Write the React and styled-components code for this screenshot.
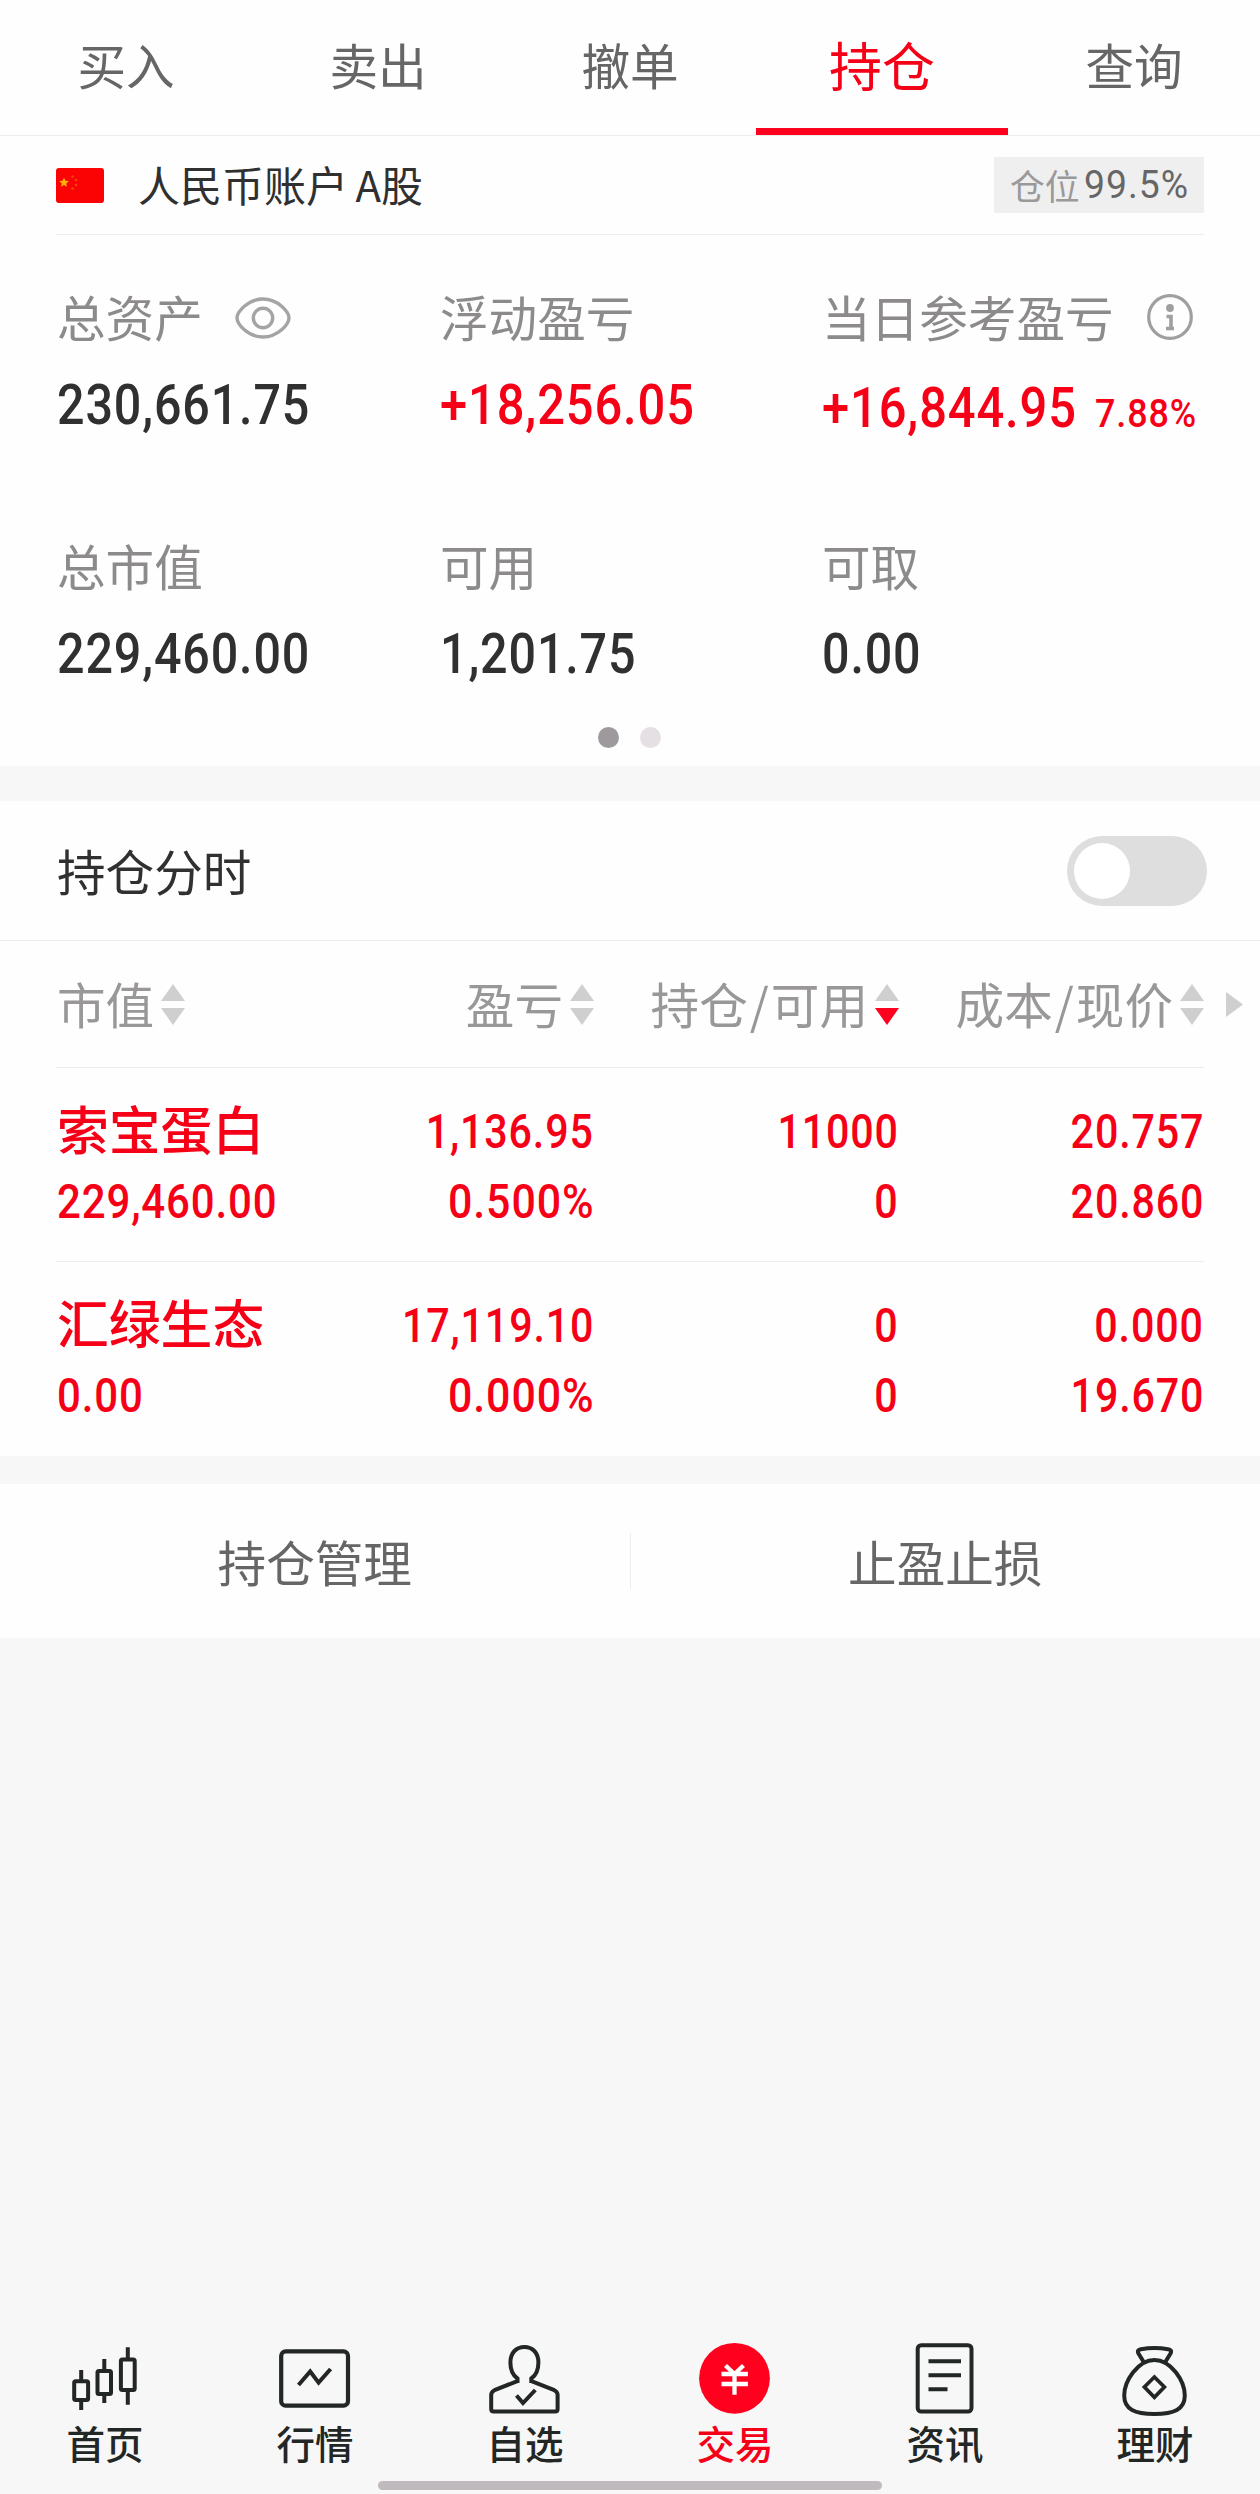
import styled, { createGlobalStyle } from "styled-components";

const GlobalStyle = createGlobalStyle`
  * {
    box-sizing: border-box;
  }
  body {
    margin: 0;
    background: #f7f7f7;
    font-family: "Noto Sans CJK SC", sans-serif;
  }
`;

const RED = "#f60018";

const Page = styled.div`
  width: 1260px;
  height: 2494px;
  display: flex;
  flex-direction: column;
  background: #f7f7f7;
  overflow: hidden;
`;

const Panel = styled.section`
  background: #fefefe;
  margin-bottom: ${({ $gap }) => $gap || 0}px;
`;

/* DIN-like digits: Roboto, slightly condensed */
const Num = styled.span`
  display: inline-block;
  font-family: Roboto, "Noto Sans CJK SC", sans-serif;
  font-size: ${({ $size }) => $size || 56}px;
  font-weight: ${({ $weight }) => $weight || 500};
  color: ${({ $color }) => $color || "inherit"};
  line-height: 1;
  letter-spacing: 1px;
  white-space: nowrap;
  transform: scaleX(${({ $scale }) => $scale || 0.865});
  transform-origin: ${({ $origin }) => $origin || "left"} center;
`;

const Tabs = styled.nav`
  display: flex;
  height: 136px;
  border-bottom: 1px solid #ececec;
`;

const Tab = styled.div`
  flex: 1;
  height: 135px;
  padding-top: 4px;
  text-align: center;
  line-height: 120px;
  font-size: ${({ $active }) => ($active ? 53 : 48.6)}px;
  color: ${({ $active }) => ($active ? RED : "#666")};
  border-bottom: ${({ $active }) => ($active ? "7px solid #ff001e" : "none")};
`;

const Account = styled.div`
  display: flex;
  align-items: center;
  height: 99px;
  margin: 0 56px;
  border-bottom: 1px solid #ededed;
`;

const AccountName = styled.div`
  flex: 1;
  margin-left: 34px;
  margin-top: -2px;
  font-size: 42px;
  line-height: 60px;
  color: #303030;
  word-spacing: -2px;
`;

const PositionBadge = styled.div`
  display: flex;
  align-items: center;
  width: 210px;
  height: 56px;
  padding-left: 16px;
  gap: 4px;
  background: #efefef;
  color: #999;
  font-size: 34.8px;
  line-height: 50px;
`;

const Summary = styled.div`
  display: grid;
  grid-template-columns: 383px 382px 1fr;
  padding: 50px 0 0 57px;
  height: 467px;
`;

const Stat = styled.div`
  height: 249px;
`;

const StatLabel = styled.div`
  display: flex;
  align-items: center;
  height: 62px;
  font-size: 48.6px;
  line-height: 62px;
  color: #8c8a8b;
`;

const StatValue = styled.div`
  display: flex;
  align-items: baseline;
  margin-top: ${({ $low }) => ($low ? 33 : 30)}px;
  color: ${({ $up }) => ($up ? RED : "#303030")};
`;

const DayRate = styled(Num)`
  margin-left: -19px;
`;

const Dots = styled.div`
  display: flex;
  justify-content: center;
  gap: 21px;
  height: 64px;
  padding: 25px 1px 0 0;
`;

const Dot = styled.i`
  width: 21px;
  height: 21px;
  border-radius: 50%;
  background: ${({ $on }) => ($on ? "#9d999c" : "#e5e0e4")};
`;

const ToggleRow = styled.div`
  display: flex;
  align-items: center;
  justify-content: space-between;
  height: 140px;
  padding: 0 53px 2px 57px;
  border-bottom: 1px solid #ececec;
  font-size: 48.6px;
  color: #303030;
`;

const Switch = styled.div`
  width: 140px;
  height: 70px;
  margin-top: 2px;
  padding: 7px;
  border-radius: 35px;
  background: #dedede;
  &::before {
    content: "";
    display: block;
    width: 56px;
    height: 56px;
    border-radius: 50%;
    background: #fff;
  }
`;

const TableHead = styled.div`
  display: flex;
  padding-left: 56px;
`;

const Row = styled.div`
  display: grid;
  grid-template-columns: 233px 305px 305px 305px;
  width: 1148px;
`;

const HeadRow = styled(Row)`
  height: 127px;
  align-items: center;
  border-bottom: 1px solid #ededed;
  font-size: 48.6px;
  line-height: 70px;
  color: #999798;
`;

const HeadCell = styled.div`
  display: flex;
  align-items: center;
  justify-content: ${({ $left }) => ($left ? "flex-start" : "flex-end")};
  padding-left: ${({ $left }) => ($left ? 1 : 0)}px;
  gap: 7px;
  white-space: nowrap;
`;

const HeadLabel = styled.span`
  margin-top: -2px;
`;

const Slash = styled.span`
  padding: 0 2px;
`;

const MoreCell = styled.div`
  display: flex;
  align-items: center;
  padding-left: 22px;
`;

const HoldingRow = styled(Row)`
  height: 194px;
  margin-left: 56px;
  padding-top: 29px;
  border-bottom: ${({ $last }) => ($last ? "none" : "1px solid #ededed")};
  color: ${RED};
`;

const HoldingCell = styled.div`
  display: flex;
  flex-direction: column;
  align-items: ${({ $left }) => ($left ? "flex-start" : "flex-end")};
  padding-left: ${({ $left }) => ($left ? 1 : 0)}px;
`;

const Line = styled.div`
  display: flex;
  align-items: center;
  height: 70px;
`;

const StockName = styled.span`
  font-size: 51.8px;
  line-height: 70px;
  font-weight: 500;
  margin-top: -8px;
`;

const Actions = styled.div`
  display: flex;
  align-items: center;
  height: 154px;
`;

const Action = styled.div`
  flex: 1;
  text-align: center;
  font-size: 48.6px;
  line-height: 56px;
  color: #666;
  & + & {
    border-left: 1px solid #ececec;
  }
`;

const BottomNav = styled.nav`
  display: flex;
  margin-top: auto;
`;

const NavItem = styled.div`
  flex: 1;
  display: flex;
  flex-direction: column;
  align-items: center;
  font-size: 38.5px;
  line-height: 49px;
  font-weight: 500;
  color: ${({ $active }) => ($active ? RED : "#222624")};
`;

const HomeBar = styled.div`
  flex: none;
  width: 504px;
  height: 9px;
  margin: 14px auto 4px 378px;
  border-radius: 5px;
  background: #bfbabe;
`;

const Flag = () => (
  <svg width="48" height="35" viewBox="0 0 48 35">
    <rect width="48" height="35" rx="3" fill="#fb0204" />
    <path d="M8 9.500l1.400 3.300 3.400.3-2.600 2.300.8 3.400-3-1.800-3 1.800.8-3.400-2.600-2.300 3.400-.3z" fill="#ffb400" />
    <g fill="#f04a00">
      <circle cx="16.500" cy="8.500" r="1.300" />
      <circle cx="20" cy="12" r="1.300" />
      <circle cx="20" cy="17" r="1.300" />
      <circle cx="16.500" cy="20.500" r="1.300" />
    </g>
  </svg>
);

const EyeIcon = styled((props) => (
  <svg {...props} width="56" height="42" viewBox="0 0 56 42" fill="none" stroke="#a5a3a4" strokeWidth="3.4">
    <path d="M2 21C2 15 13 2 28 2s26 13 26 19-11 19-26 19S2 27 2 21z" />
    <circle cx="28" cy="21" r="9.700" />
  </svg>
))`
  margin-left: 32px;
  margin-top: 4px;
`;

const InfoIcon = styled((props) => (
  <svg {...props} width="46" height="46" viewBox="0 0 46 46" fill="none" stroke="#a09e9f" strokeWidth="3.2">
    <circle cx="23" cy="23" r="21.300" />
    <circle cx="23" cy="14" r="3.900" fill="#a09e9f" stroke="none" />
    <path d="M19.500 22.500H24V34.500M19 34.500h8" strokeWidth="3.600" />
  </svg>
))`
  margin-left: 33px;
  margin-top: 1px;
`;

const SortIcon = ({ active }) => (
  <svg width="24" height="41" viewBox="0 0 24 41">
    <path d="M12 0l12 17H0z" fill="#cfcfcf" />
    <path d="M0 24h24L12 41z" fill={active ? "#ff001e" : "#cfcfcf"} />
  </svg>
);

const MoreIcon = () => (
  <svg width="17" height="25" viewBox="0 0 17 25">
    <path d="M0 0l17 12.500L0 25z" fill="#cfcfcf" />
  </svg>
);

const NavSvg = ({ children }) => (
  <svg width="72" height="78" viewBox="0 0 72 78" fill="none" stroke="#222624" strokeWidth="4">
    {children}
  </svg>
);

const icons = {
  home: (
    <NavSvg>
      <rect x="5.200" y="41.200" width="13.900" height="18.800" rx="1.500" />
      <rect x="28.500" y="31" width="13.500" height="23" rx="1.500" />
      <rect x="51.900" y="19.600" width="13.800" height="30.500" rx="1.500" />
      <path d="M12.200 30v10M12.200 61v9M35.300 19v11M35.300 55v8M58.800 7.300v11M58.800 51v13.700" />
    </NavSvg>
  ),
  market: (
    <NavSvg>
      <rect x="2.200" y="11.300" width="66.800" height="54.400" rx="4.500" strokeWidth="4.200" />
      <path d="M19.500 45L31.200 31.500l8.400 11.100L51.600 29" />
    </NavSvg>
  ),
  favorite: (
    <NavSvg>
      <path d="M28.500 43V38.500C24 35.500 21.400 30 21.400 22.500 21.400 12.500 27.500 7 35.400 7s14 5.500 14 15.500c0 7.500-2.600 13-7.100 16V43M29 40.800L5.500 50.200Q2.200 51.800 2.200 55v14q0 2.500 2.500 2.500h61.400q2.500 0 2.500-2.500V55q0-3.200-3.300-4.800L41.800 40.800" />
      <path d="M27.500 55.500l6.500 7.500L46.300 50" />
    </NavSvg>
  ),
  trade: (
    <NavSvg>
      <circle cx="35.500" cy="38.300" r="35.400" fill="#ff001e" stroke="none" />
      <path d="M26.500 25.500l9 8.500 9-8.500M22.500 34h26.400M22.500 44h26.400M35.500 33v21.700" stroke="#fff" strokeWidth="4.300" />
    </NavSvg>
  ),
  news: (
    <NavSvg>
      <rect x="8.700" y="5.200" width="53.800" height="66.400" rx="3.500" />
      <path d="M19.500 21.300H52M19.500 35.300H52M19.500 49.200h19" />
    </NavSvg>
  ),
  wealth: (
    <NavSvg>
      <path d="M35.400 20C19 20 5.200 41 5.200 55.500 5.200 69.500 16 74 35.400 74s30.400-4.500 30.400-18.500C65.800 41 52 20 35.400 20z" />
      <path d="M25 22.500l-5.500-9c-1.500-3 0-3.800 2.500-4.300q13.400-2.200 27 0c2.500.5 4 1.300 2.500 4.300l-5.500 9" />
      <path d="M35.400 37l10 10-10 10.300-10-10.300z" strokeWidth="3.700" />
    </NavSvg>
  ),
};

const tabs = ["买入", "卖出", "撤单", "持仓", "查询"];

const columns = [["市值"], ["盈亏"], ["持仓", "可用"], ["成本", "现价"]];

const holdings = [
  {
    name: "索宝蛋白",
    value: "229,460.00",
    cells: [
      ["1,136.95", "0.500%"],
      ["11000", "0"],
      ["20.757", "20.860"],
    ],
  },
  {
    name: "汇绿生态",
    value: "0.00",
    cells: [
      ["17,119.10", "0.000%"],
      ["0", "0"],
      ["0.000", "19.670"],
    ],
  },
];

const navItems = [
  { label: "首页", icon: "home" },
  { label: "行情", icon: "market" },
  { label: "自选", icon: "favorite" },
  { label: "交易", icon: "trade" },
  { label: "资讯", icon: "news" },
  { label: "理财", icon: "wealth" },
];

const App = () => (
  <>
    <GlobalStyle />
    <Page>
      <Panel $gap={35}>
        <Tabs>
          {tabs.map((tab) => (
            <Tab key={tab} $active={tab === "持仓"}>
              {tab}
            </Tab>
          ))}
        </Tabs>
        <Account>
          <Flag />
          <AccountName>人民币账户 A股</AccountName>
          <PositionBadge>
            仓位
            <Num $size={38.5} $weight={400} $scale={0.97} $color="#666">99.5%</Num>
          </PositionBadge>
        </Account>
        <Summary>
          <Stat>
            <StatLabel>
              总资产
              <EyeIcon />
            </StatLabel>
            <StatValue>
              <Num>230,661.75</Num>
            </StatValue>
          </Stat>
          <Stat>
            <StatLabel>浮动盈亏</StatLabel>
            <StatValue $up>
              <Num $scale={0.873}>+18,256.05</Num>
            </StatValue>
          </Stat>
          <Stat>
            <StatLabel>
              当日参考盈亏
              <InfoIcon />
            </StatLabel>
            <StatValue $up $low>
              <Num $scale={0.873}>+16,844.95</Num>
              <DayRate $size={39} $scale={0.92}>7.88%</DayRate>
            </StatValue>
          </Stat>
          <Stat>
            <StatLabel>总市值</StatLabel>
            <StatValue>
              <Num>229,460.00</Num>
            </StatValue>
          </Stat>
          <Stat>
            <StatLabel>可用</StatLabel>
            <StatValue>
              <Num>1,201.75</Num>
            </StatValue>
          </Stat>
          <Stat>
            <StatLabel>可取</StatLabel>
            <StatValue>
              <Num>0.00</Num>
            </StatValue>
          </Stat>
        </Summary>
        <Dots>
          <Dot $on />
          <Dot />
        </Dots>
      </Panel>

      <Panel $gap={28}>
        <ToggleRow>
          持仓分时
          <Switch />
        </ToggleRow>
        <TableHead>
          <HeadRow>
            {columns.map(([first, second], i) => (
              <HeadCell key={first} $left={i === 0}>
                <HeadLabel>
                  {first}
                  {second && <Slash>/</Slash>}
                  {second}
                </HeadLabel>
                <SortIcon active={i === 2} />
              </HeadCell>
            ))}
          </HeadRow>
          <MoreCell>
            <MoreIcon />
          </MoreCell>
        </TableHead>
        {holdings.map((item, i) => (
          <HoldingRow key={item.name} $last={i === holdings.length - 1}>
            <HoldingCell $left>
              <Line>
                <StockName>{item.name}</StockName>
              </Line>
              <Line>
                <Num $size={48.5}>{item.value}</Num>
              </Line>
            </HoldingCell>
            {item.cells.map(([top, bottom], j) => (
              <HoldingCell key={j}>
                <Line>
                  <Num $size={48.5} $scale={0.85} $origin="right">{top}</Num>
                </Line>
                <Line>
                  <Num $size={48.5} $scale={bottom.endsWith("%") ? 0.885 : 0.85} $origin="right">
                    {bottom}
                  </Num>
                </Line>
              </HoldingCell>
            ))}
          </HoldingRow>
        ))}
      </Panel>

      <Panel>
        <Actions>
          <Action>持仓管理</Action>
          <Action>止盈止损</Action>
        </Actions>
      </Panel>

      <BottomNav>
        {navItems.map((item) => (
          <NavItem key={item.label} $active={item.icon === "trade"}>
            {icons[item.icon]}
            {item.label}
          </NavItem>
        ))}
      </BottomNav>
      <HomeBar />
    </Page>
  </>
);

export default App;
